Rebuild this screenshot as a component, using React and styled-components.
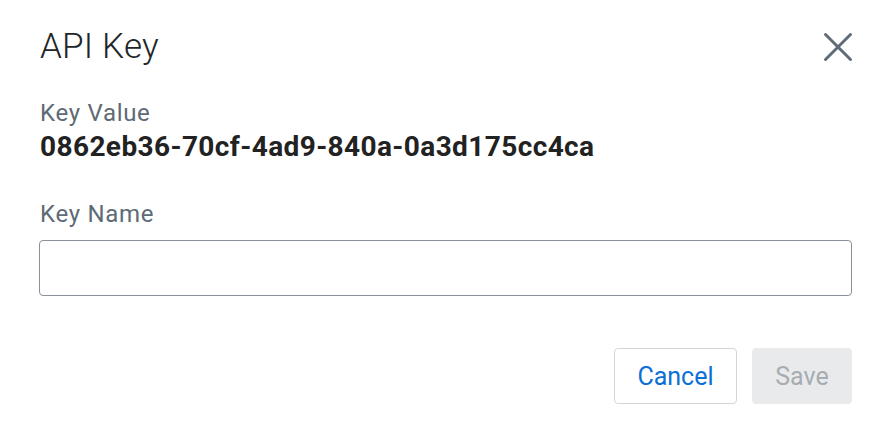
import React from "react";
import styled, { createGlobalStyle } from "styled-components";

const Global = createGlobalStyle`
  html, body { margin: 0; padding: 0; background: #fff; }
  body { font-family: Roboto, "Liberation Sans", sans-serif; }
  * { box-sizing: border-box; }
`;

const Dialog = styled.div`
  width: 890px;
  height: 424px;
  padding: 25px 38px 0 39px;
  display: flex;
  flex-direction: column;
`;

const Header = styled.div`
  display: flex;
  justify-content: space-between;
  align-items: flex-start;
  height: 44px;
`;

const Title = styled.h1`
  margin: 0 0 0 1px;
  font-weight: 300;
  font-size: 35px;
  letter-spacing: 0.2px;
  line-height: 44px;
  color: #222528;
`;

const CloseButton = styled.button`
  border: 0;
  background: none;
  padding: 0;
  width: 34px;
  height: 34px;
  margin-top: 5px;
  display: flex;
  align-items: center;
  justify-content: center;
  margin-right: -3px;
  cursor: pointer;
`;

const Label = styled.div`
  font-size: 24px;
  letter-spacing: 0.7px;
  line-height: 28px;
  color: #5e6a75;
  margin-left: 1px;
  margin-top: ${(p) => p.$top}px;
`;

const Value = styled.div`
  font-weight: 700;
  font-size: 28px;
  letter-spacing: 0.4px;
  line-height: 36px;
  color: #222;
  margin-left: 1px;
  margin-top: 2px;
`;

const Input = styled.input`
  margin-top: 12px;
  height: 56px;
  width: 100%;
  border: 1px solid #8a9199;
  border-radius: 4px;
  font: inherit;
  font-size: 24px;
  padding: 0 14px;
  outline: none;
`;

const Footer = styled.div`
  display: flex;
  justify-content: flex-end;
  gap: 15px;
  margin-top: 52px;
`;

const Button = styled.button`
  height: 56px;
  border-radius: 4px;
  font-family: inherit;
  font-size: 25px;
  padding: 0;
  width: ${(p) => p.$w}px;
  border: 1px solid ${(p) => (p.$primary ? "#e9eaec" : "#d3d6d9")};
  background: ${(p) => (p.$primary ? "#e9eaec" : "#fff")};
  color: ${(p) => (p.$primary ? "#a7acb1" : "#0b6fd5")};
`;

export default function App() {
  return (
    <>
      <Global />
      <Dialog>
        <Header>
          <Title>API Key</Title>
          <CloseButton aria-label="Close">
            <svg width="30" height="30" viewBox="0 0 30 30">
              <path d="M2.5 2.5 L27.5 27.5 M27.5 2.5 L2.5 27.5" stroke="#5f6b76" strokeWidth="3" strokeLinecap="round" />
            </svg>
          </CloseButton>
        </Header>
        <Label $top={30}>Key Value</Label>
        <Value>0862eb36-70cf-4ad9-840a-0a3d175cc4ca</Value>
        <Label $top={35}>Key Name</Label>
        <Input type="text" />
        <Footer>
          <Button $w={123}>Cancel</Button>
          <Button $primary disabled $w={100}>Save</Button>
        </Footer>
      </Dialog>
    </>
  );
}
